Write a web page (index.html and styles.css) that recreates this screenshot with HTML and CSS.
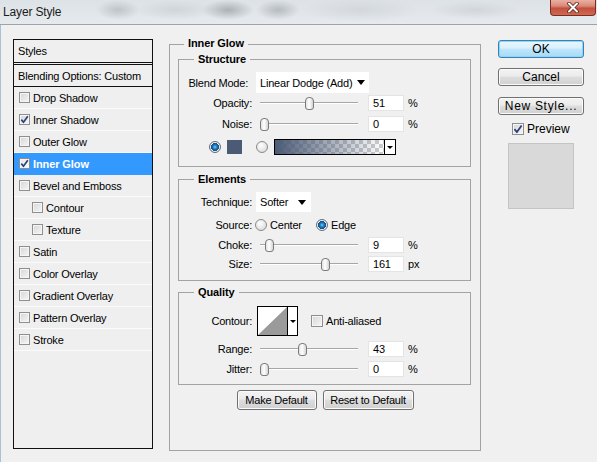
FILE: index.html
```html
<!DOCTYPE html>
<html>
<head>
<meta charset="utf-8">
<link rel="stylesheet" href="styles.css">
</head>
<body>
<div class="titlebar">
  <span class="title">Layer Style</span>
  <div class="close">
    <svg width="14" height="11" viewBox="0 0 14 11"><path d="M3 1.5 L11 9.5 M11 1.5 L3 9.5" stroke="#5b2219" stroke-width="3.6" stroke-linecap="round"/><path d="M3 1.5 L11 9.5 M11 1.5 L3 9.5" stroke="#fff" stroke-width="2" stroke-linecap="round"/></svg>
  </div>
</div>
<div class="content">
  <div class="styles">
    <div class="sh">Styles</div>
    <div class="blendopt">Blending Options: Custom</div>
    <div class="item"><span class="cb"></span>Drop Shadow</div>
    <div class="item"><span class="cb"><svg width="9" height="9" viewBox="0 0 9 9"><path d="M1.3 4.6 L3.5 7.2 L7.8 1.3" fill="none" stroke="#2b3f7c" stroke-width="1.7"/></svg></span>Inner Shadow</div>
    <div class="item"><span class="cb"></span>Outer Glow</div>
    <div class="item sel"><span class="cb"><svg width="9" height="9" viewBox="0 0 9 9"><path d="M1.3 4.6 L3.5 7.2 L7.8 1.3" fill="none" stroke="#2b3f7c" stroke-width="1.7"/></svg></span>Inner Glow</div>
    <div class="item"><span class="cb"></span>Bevel and Emboss</div>
    <div class="item sub"><span class="cb"></span>Contour</div>
    <div class="item sub"><span class="cb"></span>Texture</div>
    <div class="item"><span class="cb"></span>Satin</div>
    <div class="item"><span class="cb"></span>Color Overlay</div>
    <div class="item"><span class="cb"></span>Gradient Overlay</div>
    <div class="item"><span class="cb"></span>Pattern Overlay</div>
    <div class="item"><span class="cb"></span>Stroke</div>
  </div>

  <div class="outer">
    <div class="legend">Inner Glow</div>

    <div class="group structure">
      <div class="legend">Structure</div>
      <div class="row r-blend">
        <span class="lbl lbl-blend">Blend Mode:</span>
        <div class="dd dd-blend"><span>Linear Dodge (Add)</span><span class="arrow"></span></div>
      </div>
      <div class="row r16 mt2">
        <span class="lbl">Opacity:</span>
        <div class="slider"><span class="thumb" style="margin-left:45px"></span></div>
        <div class="num">51</div><span class="unit">%</span>
      </div>
      <div class="row r16 mt5">
        <span class="lbl">Noise:</span>
        <div class="slider"><span class="thumb" style="margin-left:0px"></span></div>
        <div class="num">0</div><span class="unit">%</span>
      </div>
      <div class="row r16 mt7 crow">
        <span class="radio on"></span>
        <span class="swatch"></span>
        <span class="radio r2"></span>
        <div class="grad"><span class="grad-fill"></span><span class="grad-btn"><span class="arrow small"></span></span></div>
      </div>
    </div>

    <div class="group elements">
      <div class="legend">Elements</div>
      <div class="row r-tech">
        <span class="lbl">Technique:</span>
        <div class="dd dd-tech"><span>Softer</span><span class="arrow"></span></div>
      </div>
      <div class="row r-src">
        <span class="lbl">Source:</span>
        <span class="radio src1"></span><span class="opt">Center</span>
        <span class="radio on"></span><span class="opt2">Edge</span>
      </div>
      <div class="row r16 mt5">
        <span class="lbl">Choke:</span>
        <div class="slider"><span class="thumb" style="margin-left:5px"></span></div>
        <div class="num">9</div><span class="unit">%</span>
      </div>
      <div class="row r16 mt3">
        <span class="lbl">Size:</span>
        <div class="slider"><span class="thumb" style="margin-left:61px"></span></div>
        <div class="num">161</div><span class="unit">px</span>
      </div>
    </div>

    <div class="group quality">
      <div class="legend">Quality</div>
      <div class="row r-contour">
        <span class="lbl">Contour:</span>
        <div class="contour">
          <svg class="curve" width="29" height="28" viewBox="0 0 29 28"><rect width="29" height="28" fill="#fff"/><polygon points="0,28 29,0 29,28" fill="#9a9a9a"/></svg>
          <span class="contour-btn"><span class="arrow small"></span></span>
        </div>
        <span class="cb cb12 aa"></span><span>Anti-aliased</span>
      </div>
      <div class="row r16 mt5">
        <span class="lbl">Range:</span>
        <div class="slider"><span class="thumb" style="margin-left:38px"></span></div>
        <div class="num">43</div><span class="unit">%</span>
      </div>
      <div class="row r16 mt4">
        <span class="lbl">Jitter:</span>
        <div class="slider"><span class="thumb" style="margin-left:0px"></span></div>
        <div class="num">0</div><span class="unit">%</span>
      </div>
    </div>

    <div class="btns">
      <div class="btn w80">Make Default</div>
      <div class="btn w91">Reset to Default</div>
    </div>
  </div>

  <div class="side">
    <div class="btn sbtn ok">OK</div>
    <div class="btn sbtn cancel">Cancel</div>
    <div class="btn sbtn newstyle">New Style...</div>
    <div class="prev"><span class="cb cb12"><svg width="10" height="10" viewBox="0 0 9 9"><path d="M1.3 4.6 L3.5 7.2 L7.8 1.3" fill="none" stroke="#2b3f7c" stroke-width="1.6"/></svg></span>Preview</div>
    <div class="pbox"></div>
  </div>
</div>
</body>
</html>
```
FILE: styles.css
```css
* { box-sizing: border-box; }
html, body { margin: 0; padding: 0; }
body {
  width: 597px;
  height: 462px;
  overflow: hidden;
  background: #f0f0f0;
  font-family: "Liberation Sans", Arial, sans-serif;
  font-size: 11px;
  letter-spacing: -0.2px;
  color: #000;
}

/* title bar */
.titlebar {
  height: 25px;
  border-bottom: 1px solid #9da3a9;
  display: flex;
  justify-content: space-between;
  align-items: flex-start;
  background:
    radial-gradient(ellipse 22px 10px at 118px 10px, rgba(150,155,160,0.45), rgba(150,155,160,0)),
    radial-gradient(ellipse 26px 10px at 228px 10px, rgba(120,125,130,0.5), rgba(120,125,130,0)),
    radial-gradient(ellipse 22px 10px at 278px 10px, rgba(130,135,140,0.45), rgba(130,135,140,0)),
    radial-gradient(ellipse 40px 10px at 175px 10px, rgba(170,175,180,0.3), rgba(170,175,180,0)),
    radial-gradient(ellipse 45px 9px at 475px 10px, rgba(200,203,206,0.6), rgba(200,203,206,0)),
    radial-gradient(ellipse 60px 12px at 360px 10px, rgba(185,190,195,0.35), rgba(185,190,195,0)),
    linear-gradient(#dde2e7, #e6eaee);
}
.title {
  margin: 5px 0 0 3px;
  font-size: 12px;
  letter-spacing: -0.15px;
  color: #1b1b1b;
}
.close {
  width: 46px;
  height: 16px;
  margin-right: 1px;
  border: 1px solid #7a2d23;
  border-top: none;
  border-radius: 0 0 4px 4px;
  background: linear-gradient(#eab0a2, #d98a78 40%, #c4503c 55%, #cf6a55);
  display: flex;
  align-items: center;
  justify-content: center;
}

.content {
  display: flex;
  align-items: flex-start;
  height: 437px;
  box-shadow: inset 1px 0 #a9c0d6;
}

/* styles list */
.styles {
  flex: none;
  margin: 14px 0 0 13px;
  width: 140px;
  height: 410px;
  border: 1px solid #111;
  background: #efefef;
}
.sh {
  height: 25px;
  border-bottom: 3px double #111;
  padding-left: 4px;
  display: flex;
  align-items: center;
}
.blendopt {
  height: 22px;
  border-bottom: 1px solid #111;
  padding-left: 4px;
  display: flex;
  align-items: center;
}
.item {
  height: 22px;
  border-bottom: 1px solid #fbfbfb;
  padding-left: 5px;
  display: flex;
  align-items: center;
}
.item.sub { padding-left: 18px; }
.item.sel {
  background: #3399ff;
  border-bottom-color: #3399ff;
  color: #fff;
  font-weight: bold;
  letter-spacing: -0.1px;
}
.cb {
  flex: none;
  width: 11px;
  height: 11px;
  margin-right: 3px;
  border: 1px solid #8f8f8f;
  background: linear-gradient(135deg, #d6d6d6, #f6f6f6);
  box-shadow: inset 0 0 0 1px #f5f5f5;
  display: flex;
  align-items: center;
  justify-content: center;
}
.item.sel .cb { background: linear-gradient(135deg, #e4e4e4, #ffffff); }
.cb12 { width: 12px; height: 12px; }

/* main panel */
.outer {
  flex: none;
  margin: 19px 0 0 16px;
  width: 312px;
  height: 407px;
  border: 1px solid #a3a3a3;
  display: flex;
  flex-direction: column;
}
.legend {
  width: max-content;
  height: 13px;
  line-height: 13px;
  margin: -8px 0 0 14px;
  padding: 0 4px;
  background: #f0f0f0;
  font-weight: bold;
  letter-spacing: -0.1px;
}
.group {
  margin-left: 8px;
  width: 293px;
  border: 1px solid #a3a3a3;
}
.group .legend { margin: -7px 0 0 15px; }
.structure { margin-top: 9px; padding-bottom: 11px; }
.elements { margin-top: 12px; padding-bottom: 8px; }
.quality { margin-top: 11px; padding-bottom: 7px; }

.row { display: flex; align-items: center; }
.r16 { height: 16px; }
.mt2 { margin-top: 2px; }
.mt3 { margin-top: 3px; }
.mt4 { margin-top: 4px; }
.mt5 { margin-top: 5px; }
.mt7 { margin-top: 7px; }
.r-blend { margin-top: 6px; height: 21px; }
.r-tech { margin-top: 6px; height: 20px; }
.r-src { margin-top: 6px; height: 14px; }
.r-contour { margin-top: 7px; height: 30px; }

.lbl { flex: none; width: 73px; text-align: right; }
.lbl-blend { width: 69px; margin-right: 4px; }

.dd {
  flex: none;
  margin-left: 4px;
  background: #fff;
  display: flex;
  align-items: center;
  justify-content: space-between;
  padding: 0 4px 0 4px;
}
.dd-blend { width: 113px; height: 21px; }
.dd-tech { width: 55px; height: 20px; padding-right: 5px; }
.arrow {
  width: 0;
  height: 0;
  border-left: 4px solid transparent;
  border-right: 4px solid transparent;
  border-top: 5px solid #000;
}
.arrow.small {
  border-left-width: 3px;
  border-right-width: 3px;
  border-top-width: 3px;
}

.slider {
  flex: none;
  margin-left: 8px;
  width: 98px;
  height: 16px;
  display: flex;
  align-items: center;
  background:
    linear-gradient(#a6a6a6, #a6a6a6) 0 7px / 100% 1px no-repeat,
    linear-gradient(#ffffff, #ffffff) 0 8px / 100% 1px no-repeat;
}
.thumb {
  flex: none;
  width: 9px;
  height: 13px;
  border: 1px solid #7b7b7b;
  border-radius: 4px 4px 3px 3px;
  background: linear-gradient(90deg, #e2e2e2, #ffffff 45%, #d4d4d4);
}
.num {
  flex: none;
  margin-left: 10px;
  width: 36px;
  height: 16px;
  background: #fff;
  border: 1px solid #e4e4e4;
  padding-left: 4px;
  display: flex;
  align-items: center;
}
.unit { margin-left: 4px; }

.radio {
  flex: none;
  width: 12px;
  height: 12px;
  border-radius: 50%;
  border: 1px solid #8a8a8a;
  background: radial-gradient(circle at 40% 35%, #ffffff, #dcdcdc 80%);
}
.radio.on {
  border-color: #5a6f85;
  background: radial-gradient(circle at 50% 50%, #7fd0fa 0, #2a8fd6 1.5px, #0e5a9c 3.2px, #2b4d6e 3.8px, #f4f4f4 4.3px, #d8d8d8 6px);
}
.crow { padding-left: 30px; }
.swatch {
  flex: none;
  margin-left: 6px;
  width: 15px;
  height: 14px;
  background: #4b5b76;
}
.r2 { margin-left: 14px; }
.grad {
  flex: none;
  margin-left: 6px;
  width: 122px;
  height: 16px;
  border: 1px solid #000;
  display: flex;
}
.grad-fill {
  flex: 1;
  background:
    linear-gradient(to right, #4b5b76, rgba(75, 91, 118, 0.55) 45%, rgba(75, 91, 118, 0)),
    repeating-conic-gradient(#cdcdcd 0 25%, #ffffff 0 50%) 0 0 / 8px 8px;
}
.grad-btn {
  flex: none;
  width: 11px;
  border-left: 1px solid #000;
  background: #fff;
  display: flex;
  align-items: center;
  justify-content: center;
}

.src1 { margin-left: 3px; }
.opt { width: 46px; margin-left: 3px; }
.opt2 { margin-left: 3px; }

.contour {
  flex: none;
  margin-left: 5px;
  width: 41px;
  height: 30px;
  border: 1px solid #000;
  display: flex;
}
.curve { flex: none; display: block; }
.contour-btn {
  flex: 1;
  border-left: 1px solid #000;
  background: #fff;
  display: flex;
  align-items: center;
  justify-content: center;
}
.aa { margin-left: 13px; margin-right: 3px; }

.btns {
  margin-top: 5px;
  display: flex;
  justify-content: center;
  gap: 6px;
}
.btn {
  flex: none;
  height: 20px;
  border: 1px solid #707070;
  border-radius: 3px;
  background: linear-gradient(#f3f3f3, #ebebeb 45%, #dddddd 50%, #d0d0d0);
  box-shadow: inset 0 0 0 1px #fbfbfb;
  display: flex;
  align-items: center;
  justify-content: center;
}
.w80 { width: 80px; }
.w91 { width: 91px; }

/* right column */
.side {
  flex: none;
  margin: 15px 0 0 17px;
  width: 86px;
  display: flex;
  flex-direction: column;
}
.sbtn {
  height: 18px;
  font-size: 12px;
  letter-spacing: 0;
}
.ok {
  border-color: #3c7fb1;
  box-shadow: inset 0 0 0 1px #8fd5f7;
  background: linear-gradient(#eaf6fd, #d9f0fc 45%, #bee6fd 50%, #a7d9f5);
}
.cancel { margin-top: 10px; }
.newstyle { margin-top: 11px; letter-spacing: 0.7px; }
.prev {
  margin: 7px 0 0 14px;
  height: 13px;
  display: flex;
  align-items: center;
  font-size: 12px;
  letter-spacing: 0;
}
.pbox {
  margin: 8px 0 0 10px;
  width: 66px;
  height: 66px;
  background: #d9d9d9;
  border: 1px solid #c4c4c4;
}
```
